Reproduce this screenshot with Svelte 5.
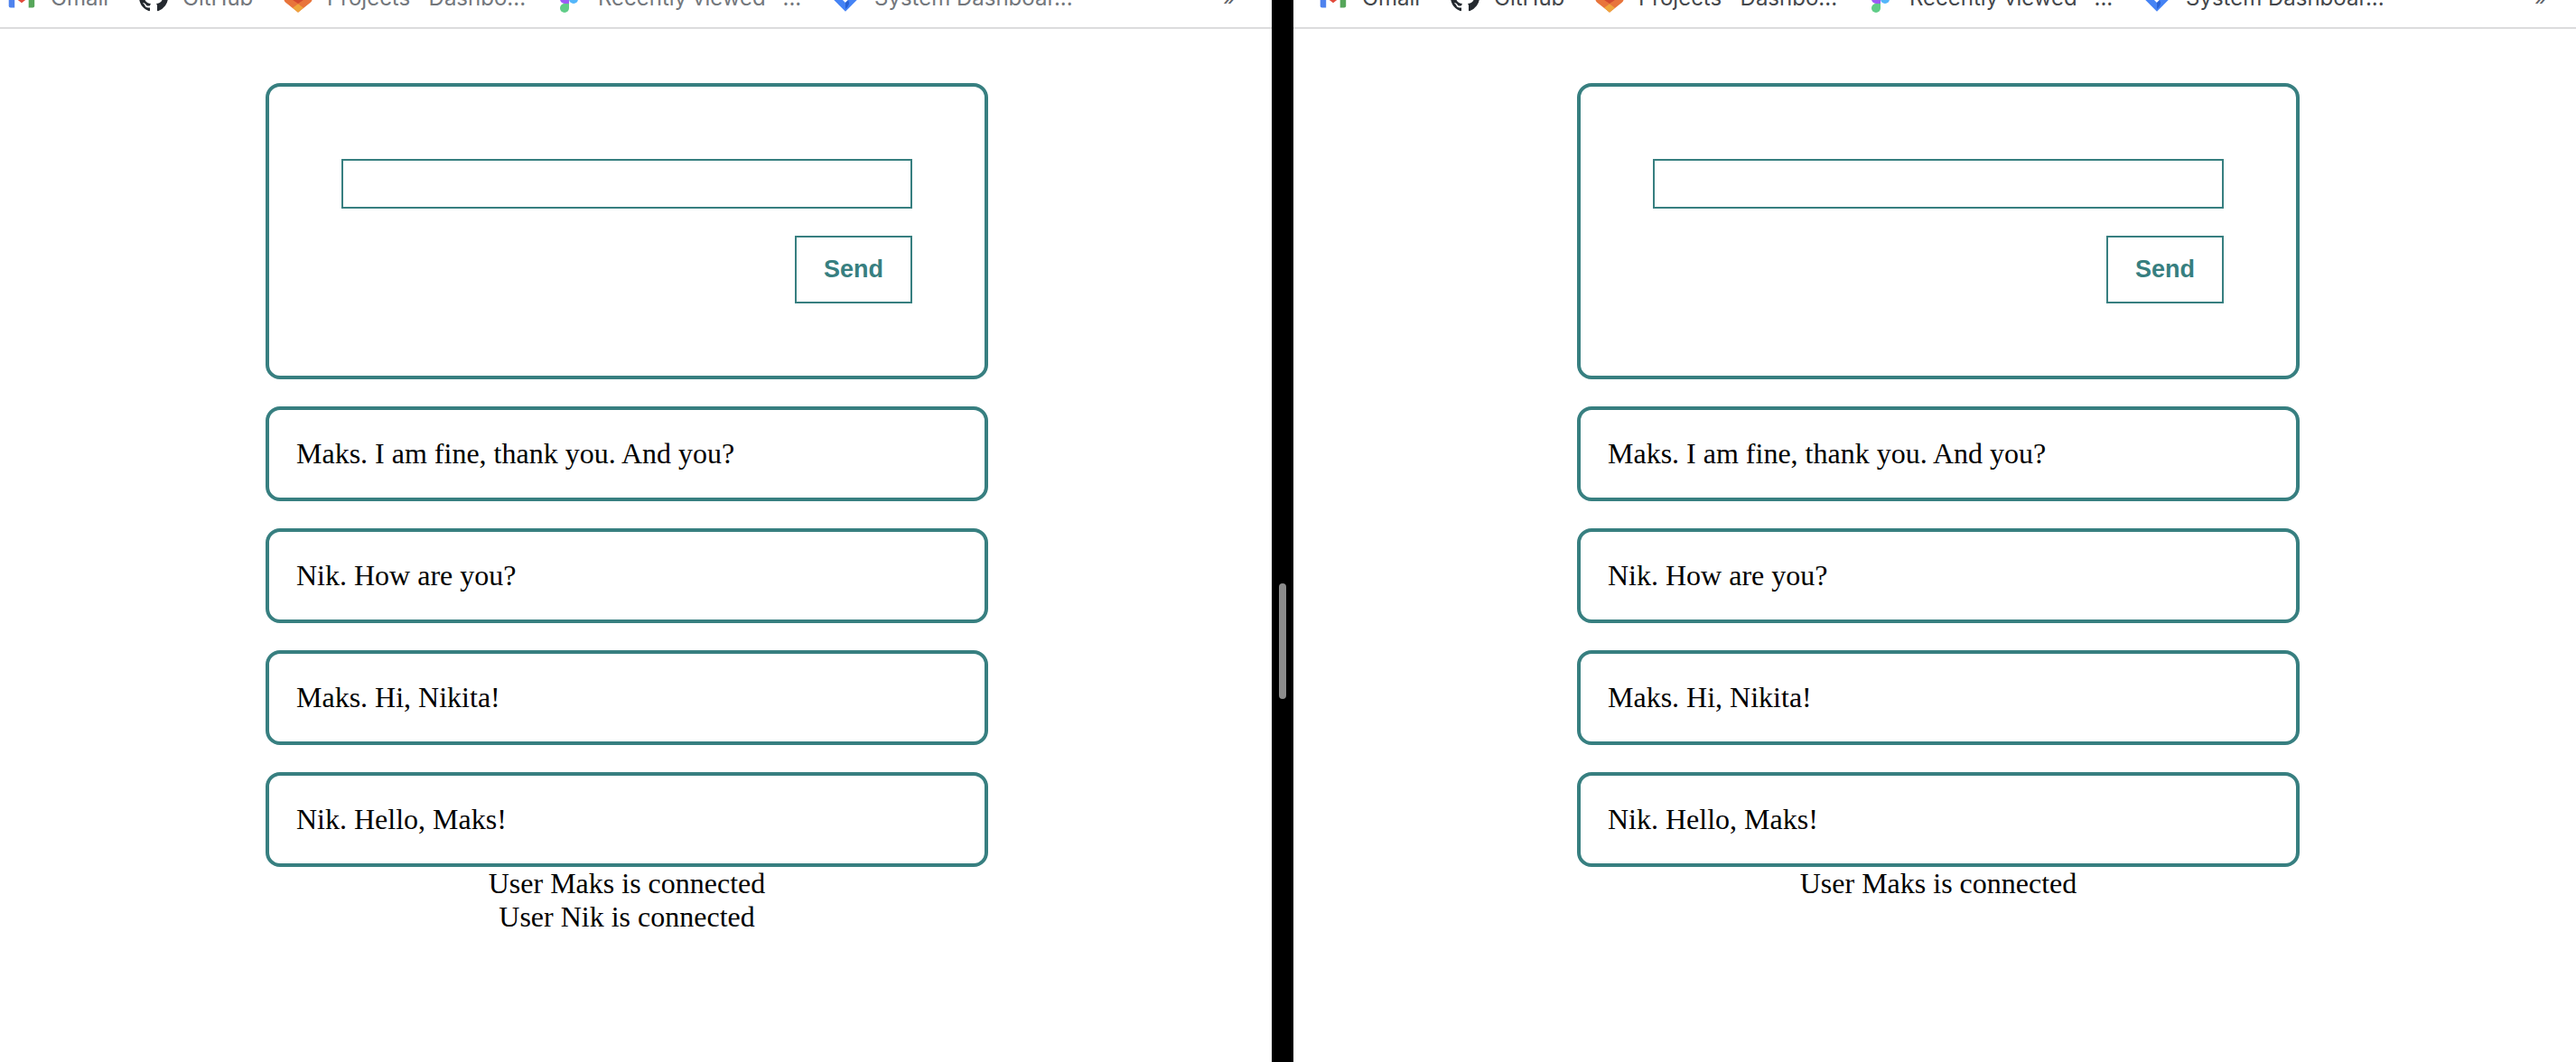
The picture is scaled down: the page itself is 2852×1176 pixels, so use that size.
<script>
  const messages = [
    'Maks. I am fine, thank you. And you?',
    'Nik. How are you?',
    'Maks. Hi, Nikita!',
    'Nik. Hello, Maks!',
  ];
  const bookmarks = [
    { icon: 'gmail', label: 'Gmail' },
    { icon: 'github', label: 'GitHub' },
    { icon: 'gitlab', label: 'Projects · Dashbo...' },
    { icon: 'figma', label: 'Recently viewed –...' },
    { icon: 'jira', label: 'System Dashboar...' },
  ];
  const panes = [
    { side: 'left', statuses: ['User Maks is connected', 'User Nik is connected'] },
    { side: 'right', statuses: ['User Maks is connected'] },
  ];
</script>

{#snippet icon(name)}
  <svg class="icon" viewBox="0 0 32 32" aria-hidden="true">
    {#if name === 'gmail'}
      <path fill="#4f83ee" d="M1.700 8l6.500 5v14.500H3.700a2 2 0 0 1-2-2z" />
      <path fill="#56a65a" d="M30.200 8l-6.500 5v14.500h4.500a2 2 0 0 0 2-2z" />
      <path fill="#e24a3b" d="M8.200 8l7.800 6 7.700-6v8.300L16 22.200l-7.800-5.900z" />
    {:else if name === 'github'}
      <path
        fill="#24292f"
        transform="scale(2)"
        d="M8 0C3.580 0 0 3.580 0 8c0 3.540 2.290 6.530 5.470 7.590.4.070.55-.17.55-.38 0-.19-.01-.82-.01-1.490-2.010.37-2.530-.49-2.690-.94-.09-.23-.48-.94-.82-1.130-.28-.15-.68-.52-.01-.53.63-.01 1.080.58 1.230.82.72 1.210 1.870.87 2.330.66.07-.52.28-.87.51-1.070-1.780-.2-3.640-.89-3.640-3.950 0-.87.31-1.590.82-2.150-.08-.2-.36-1.020.08-2.120 0 0 .67-.21 2.200.82.64-.18 1.320-.27 2-.27s1.360.09 2 .27c1.530-1.040 2.200-.82 2.200-.82.44 1.100.16 1.920.08 2.120.51.56.82 1.270.82 2.150 0 3.070-1.870 3.750-3.650 3.950.29.25.54.73.54 1.480 0 1.070-.01 1.930-.01 2.200 0 .21.15.46.55.38A8.010 8.010 0 0 0 16 8c0-4.420-3.580-8-8-8z"
      />
    {:else if name === 'gitlab'}
      <path fill="#e8743b" d="M0 16L4 3l6 9h12l6-9 4 13q0 4-2.500 6L16 32.700 2.500 22Q0 20 0 16z" />
      <path fill="#d2492f" d="M10 12h12l2 6-8 5.500L8 18z" />
      <path fill="#e8743b" d="M10 27.800l-4-8 4-.8 6 4 6-4 4 .8-4 8-6-4.600z" />
      <path fill="#eea43c" d="M16 23.200l6 4.600-6 4.900-6-4.900z" />
    {:else if name === 'figma'}
      <path fill="#e9573b" d="M16 3h-5a5 5 0 0 0 0 10h5z" />
      <path fill="#f0796a" d="M16 3h5a5 5 0 0 1 0 10h-5z" />
      <path fill="#9b5cf6" d="M16 13h-5a5 5 0 0 0 0 10h5z" />
      <circle fill="#54b6fa" cx="21" cy="18" r="5" />
      <path fill="#60cd88" d="M16 23h-5a5 5 0 1 0 5 5z" />
    {:else}
      <path fill="#4583f5" d="M16 .3L31.700 16 16 31.700.3 16z" />
      <path fill="#fff" d="M16 10l6 6-6 6-6-6z" />
      <path fill="#2a62d4" d="M16 22l3-3q3 5-3 10z" />
    {/if}
  </svg>
{/snippet}

{#snippet browser(pane)}
  <section class="pane {pane.side}">
    <nav class="bookmarks" aria-label="Bookmarks">
      {#each bookmarks as b}
        <a class="bookmark" href="#{b.icon}">{@render icon(b.icon)}<span>{b.label}</span></a>
      {/each}
      <button class="more" type="button" aria-label="More bookmarks">»</button>
    </nav>
    <main class="chat">
      <form class="card composer" onsubmit={(e) => e.preventDefault()}>
        <input type="text" aria-label="Message" />
        <button class="send" type="submit">Send</button>
      </form>
      {#each messages as message}
        <p class="card message">{message}</p>
      {/each}
      <div class="statuses">
        {#each pane.statuses as status}
          <p>{status}</p>
        {/each}
      </div>
    </main>
  </section>
{/snippet}

<div class="screen">
  {@render browser(panes[0])}
  <div class="divider" role="separator" aria-orientation="vertical"><span class="grip"></span></div>
  {@render browser(panes[1])}
</div>

<style>
  :global(body) {
    background: #fff;
  }

  .screen {
    --teal: #377f80;
    display: flex;
    min-height: 100vh;
    color: #000;
    font-family: 'Liberation Serif', 'Times New Roman', serif;
    font-size: 32px;
    line-height: 37px;
  }

  .pane {
    min-width: 0;
    flex: 352 1 0;
    --label: #73777c;
  }

  .pane.right {
    flex-grow: 355;
    --label: #44474b;
  }

  /* The bar is scrolled up: only the lower edge of each bookmark shows. */
  .bookmarks {
    display: grid;
    grid-template-columns: 146px 160px 300px 306px 1fr auto;
    align-content: end;
    align-items: end;
    box-sizing: border-box;
    height: 32px;
    padding: 0 40px 17px 8px;
    overflow: hidden;
    border-bottom: 2px solid #dcdcdd;
    font-family: Inter, sans-serif;
    font-size: 24px;
    line-height: 30px;
  }

  .right .bookmarks {
    padding-left: 28px;
    padding-right: 32px;
  }

  .bookmark {
    display: flex;
    align-items: end;
    gap: 16px;
    color: var(--label);
    text-decoration: none;
    white-space: nowrap;
  }

  .icon {
    flex: none;
    width: 32px;
    height: 32px;
    overflow: visible;
  }

  .more {
    padding: 0;
    border: 0;
    background: none;
    color: #5f6368;
    font: inherit;
  }

  .chat {
    display: flex;
    flex-direction: column;
    gap: 30px;
    max-width: 800px;
    margin: 0 auto;
    padding-top: 60px;
  }

  .left .chat {
    padding-right: 20px;
  }

  .right .chat {
    padding-left: 8px;
  }

  .card {
    box-sizing: border-box;
    margin: 0;
    border: 4px solid var(--teal);
    border-radius: 16px;
  }

  .composer {
    display: flex;
    flex-direction: column;
    align-items: flex-end;
    gap: 30px;
    padding: 80px;
  }

  input {
    box-sizing: border-box;
    width: 100%;
    height: 55px;
    padding: 8px 16px;
    border: 2px solid var(--teal);
    outline: 0;
    font: inherit;
  }

  .send {
    padding: 20px 30px;
    border: 2px solid var(--teal);
    background: #fff;
    color: var(--teal);
    font-family: 'Liberation Sans', Arial, sans-serif;
    font-size: 27px;
    font-weight: 700;
    line-height: 31px;
  }

  .message {
    padding: 30px;
  }

  .statuses {
    margin-top: -30px;
    text-align: center;
  }

  .statuses p {
    margin: 0;
  }

  .divider {
    display: flex;
    align-items: center;
    justify-content: center;
    box-sizing: border-box;
    width: 24px;
    flex: none;
    padding-top: 244px;
    background: #000;
  }

  .grip {
    width: 8px;
    height: 128px;
    border-radius: 4px;
    background: #8c8c8c;
  }
</style>
